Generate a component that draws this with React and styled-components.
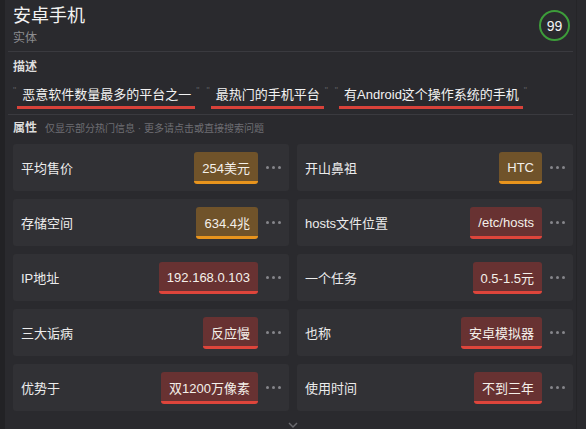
import React from "react";
import styled, { createGlobalStyle } from "styled-components";

const Global = createGlobalStyle`
  html, body { margin: 0; padding: 0; background: #2a2a2e; }
  body { font-family: "Liberation Sans", "Noto Sans CJK SC", sans-serif; color: #e8e8e8; }
  * { box-sizing: border-box; }
`;

const Page = styled.div`
  width: 586px;
  height: 429px;
  overflow: hidden;
  background: #2a2a2e;
  border-left: 5px solid #222225;
`;

const Panel = styled.div`
  width: 572px;
  padding: 0 3px 0 3px;
  border-right: 1px solid #252528;
  min-height: 429px;
`;

const Header = styled.div`
  display: flex;
  align-items: flex-start;
  justify-content: space-between;
  padding: 4px 3px 0 5px;
  height: 52px;
  border-bottom: 1px solid #3a3a3f;
`;

const TitleBlock = styled.div`
  display: flex;
  flex-direction: column;
`;

const Title = styled.div`
  font-size: 18px;
  line-height: 25px;
  color: #f2f2f2;
`;

const Subtitle = styled.div`
  font-size: 12px;
  line-height: 15px;
  margin-top: 2px;
  color: #8c8c90;
`;

const Score = styled.div`
  width: 31px;
  height: 31px;
  margin-top: 6px;
  border-radius: 50%;
  border: 2px solid #3d9d3a;
  display: flex;
  align-items: center;
  justify-content: center;
  font-size: 14px;
  color: #f4f4f4;
`;

const Section = styled.div`
  padding: 0 0 0 5px;
  border-bottom: ${(p) => (p.$divider ? "1px solid #3a3a3f" : "none")};
  height: ${(p) => p.$h || "auto"};
`;

const SectionTitle = styled.div`
  display: flex;
  align-items: baseline;
  gap: 8px;
  font-size: 12px;
  font-weight: bold;
  color: #dcdcdc;
  line-height: 16px;
  padding-top: ${(p) => p.$pt || "6px"};
`;

const Hint = styled.span`
  font-size: 10px;
  font-weight: normal;
  color: #6e6e73;
`;

const Tags = styled.div`
  display: flex;
  gap: 7px;
  margin-top: 8px;
`;

const Tag = styled.div`
  display: flex;
  align-items: flex-start;
  gap: 1px;
`;

const Mark = styled.span`
  font-size: 9px;
  line-height: 10px;
  color: #5e5e62;
  padding-top: 2px;
`;

const TagBody = styled.span`
  font-size: 13px;
  line-height: 23px;
  padding: 0 4px 0 5px;
  color: #f2f2f2;
  border-bottom: 3px solid #d8423a;
`;

const Grid = styled.div`
  display: grid;
  grid-template-columns: 276px 276px;
  column-gap: 8px;
  row-gap: 8px;
  padding: 0 0 0 5px;
  margin-top: 7px;
`;

const Card = styled.div`
  height: 47px;
  background: #313135;
  border-radius: 3px;
  display: flex;
  align-items: center;
  padding: 0 7px 0 8px;
`;

const Label = styled.div`
  flex: 1;
  font-size: 13px;
  color: #ececec;
`;

const Badge = styled.div`
  height: 32px;
  display: flex;
  align-items: center;
  padding: 0 8px;
  font-size: 13px;
  border-radius: 3px;
  color: #f4f0ea;
  background: ${(p) => (p.$tone === "gold" ? "#70532a" : "#683232")};
  border-bottom: 3px solid ${(p) => (p.$tone === "gold" ? "#e8941d" : "#de453b")};
  padding-top: 3px;
`;

const Dots = styled.div`
  display: flex;
  gap: 3px;
  margin-left: 8px;
  width: 16px;
  span {
    width: 3px;
    height: 3px;
    border-radius: 50%;
    background: #86868b;
  }
`;

const More = styled.div`
  display: flex;
  justify-content: center;
  margin-top: 9px;
  padding-left: 5px;
`;

const tags = ["恶意软件数量最多的平台之一", "最热门的手机平台", "有Android这个操作系统的手机"];

const props = [
  ["平均售价", "254美元", "gold"],
  ["开山鼻祖", "HTC", "gold"],
  ["存储空间", "634.4兆", "gold"],
  ["hosts文件位置", "/etc/hosts", "red"],
  ["IP地址", "192.168.0.103", "red"],
  ["一个任务", "0.5-1.5元", "red"],
  ["三大诟病", "反应慢", "red"],
  ["也称", "安卓模拟器", "red"],
  ["优势于", "双1200万像素", "red"],
  ["使用时间", "不到三年", "red"],
];

export default function App() {
  return (
    <Page>
      <Global />
      <Panel>
        <Header>
          <TitleBlock>
            <Title>安卓手机</Title>
            <Subtitle>实体</Subtitle>
          </TitleBlock>
          <Score>99</Score>
        </Header>
        <Section $divider $h="63px">
          <SectionTitle $pt="7px">描述</SectionTitle>
          <Tags>
            {tags.map((t) => (
              <Tag key={t}>
                <Mark>"</Mark>
                <TagBody>{t}</TagBody>
                <Mark>"</Mark>
              </Tag>
            ))}
          </Tags>
        </Section>
        <Section>
          <SectionTitle $pt="5px">
            属性<Hint>仅显示部分热门信息 · 更多请点击或直接搜索问题</Hint>
          </SectionTitle>
        </Section>
        <Grid>
          {props.map(([k, v, tone]) => (
            <Card key={k}>
              <Label>{k}</Label>
              <Badge $tone={tone}>{v}</Badge>
              <Dots>
                <span />
                <span />
                <span />
              </Dots>
            </Card>
          ))}
        </Grid>
        <More>
          <svg width="14" height="10" viewBox="0 0 14 10">
            <path d="M3 3 L7 7 L11 3" stroke="#6a6a6f" strokeWidth="1.5" fill="none" />
          </svg>
        </More>
      </Panel>
    </Page>
  );
}
